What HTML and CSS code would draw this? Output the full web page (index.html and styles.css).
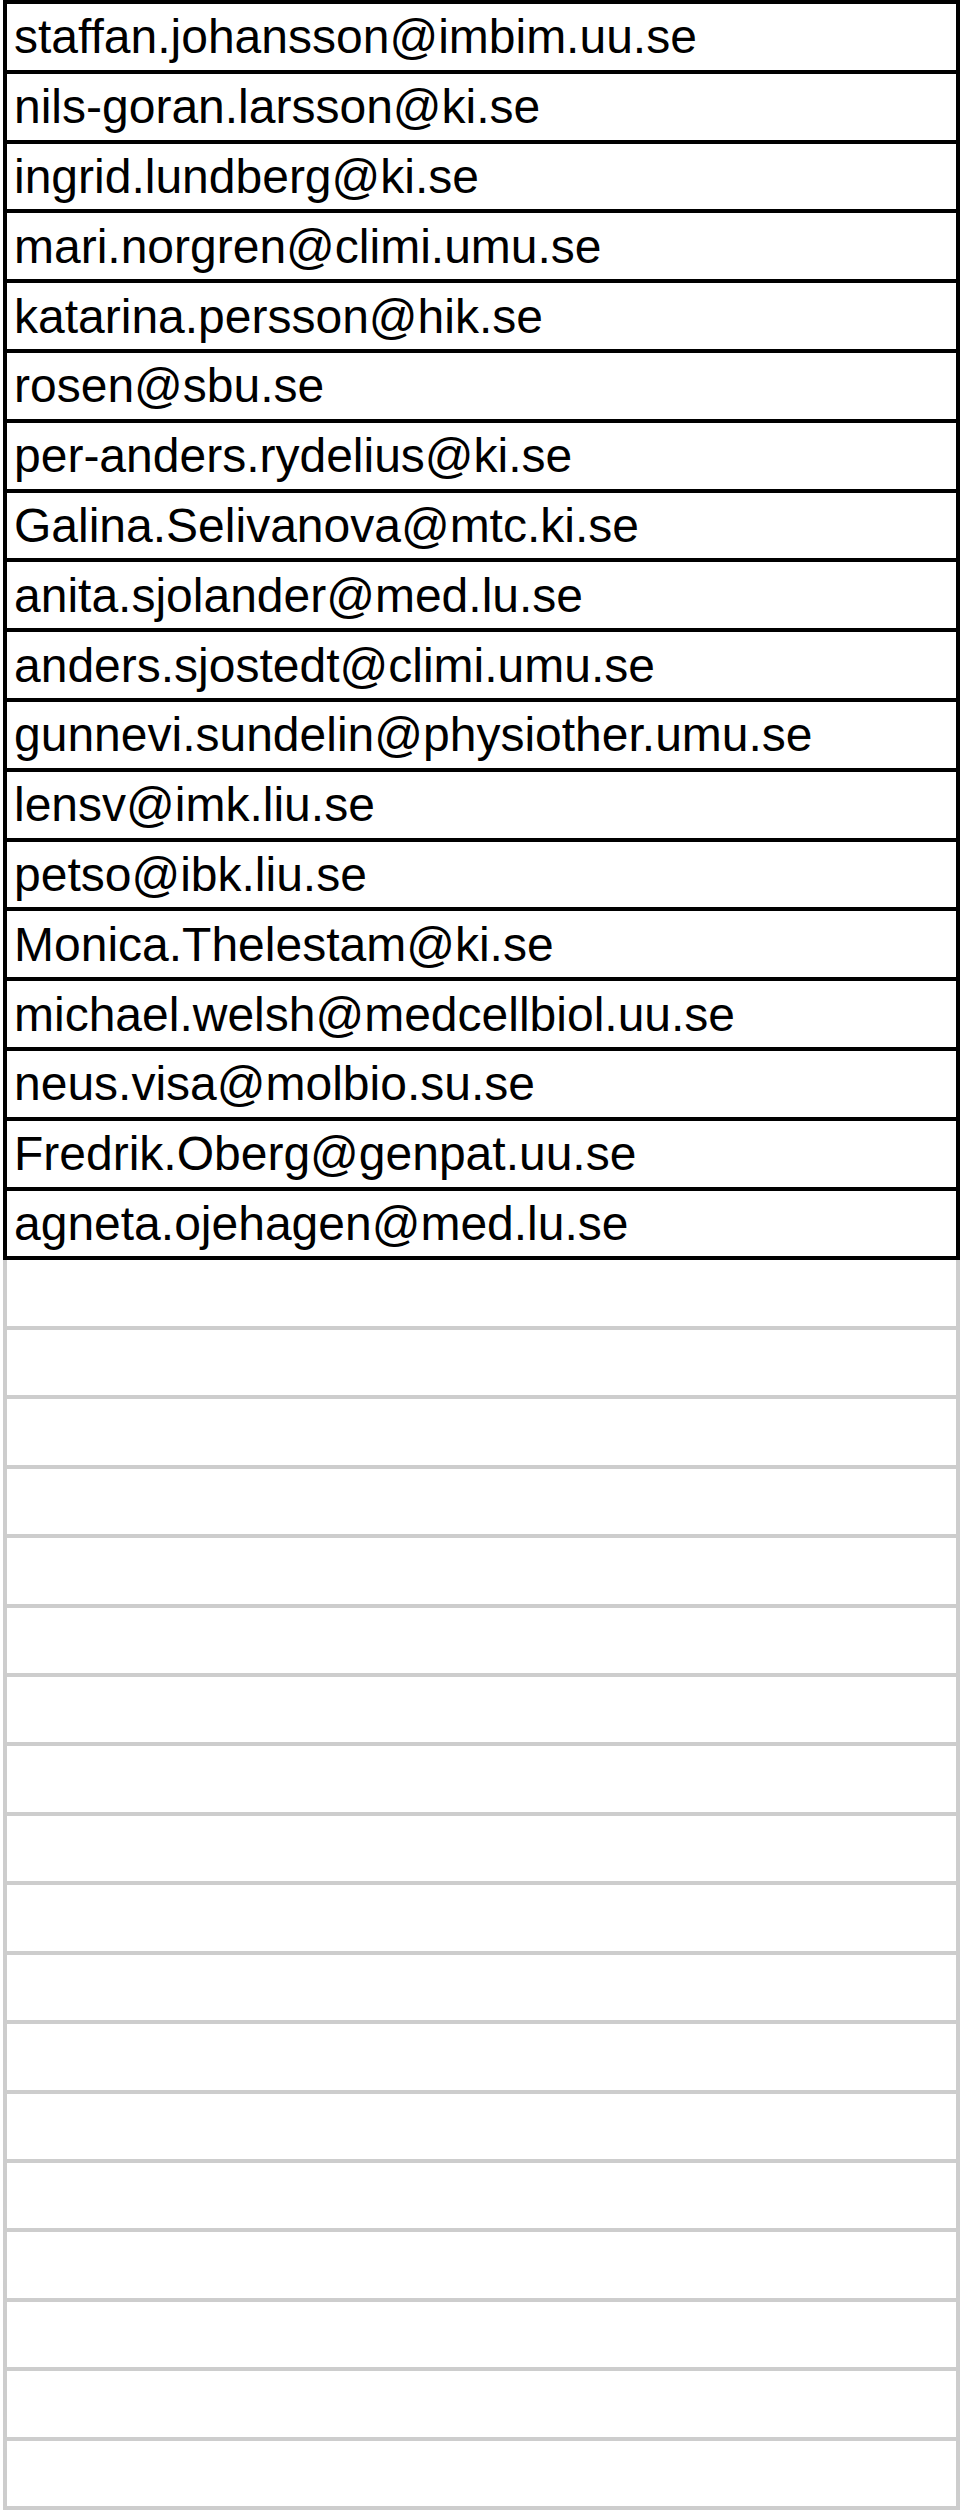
FILE: index.html
```html
<!DOCTYPE html>
<html lang="sv">
<head>
<meta charset="utf-8">
<title>E-postlista</title>
<link rel="stylesheet" href="styles.css">
</head>
<body>
<div class="sheet">
  <div class="filled">
    <div class="row">staffan.johansson@imbim.uu.se</div>
    <div class="row">nils-goran.larsson@ki.se</div>
    <div class="row">ingrid.lundberg@ki.se</div>
    <div class="row">mari.norgren@climi.umu.se</div>
    <div class="row">katarina.persson@hik.se</div>
    <div class="row">rosen@sbu.se</div>
    <div class="row">per-anders.rydelius@ki.se</div>
    <div class="row">Galina.Selivanova@mtc.ki.se</div>
    <div class="row">anita.sjolander@med.lu.se</div>
    <div class="row">anders.sjostedt@climi.umu.se</div>
    <div class="row">gunnevi.sundelin@physiother.umu.se</div>
    <div class="row">lensv@imk.liu.se</div>
    <div class="row">petso@ibk.liu.se</div>
    <div class="row">Monica.Thelestam@ki.se</div>
    <div class="row">michael.welsh@medcellbiol.uu.se</div>
    <div class="row">neus.visa@molbio.su.se</div>
    <div class="row">Fredrik.Oberg@genpat.uu.se</div>
    <div class="row">agneta.ojehagen@med.lu.se</div>
  </div>
  <div class="empty">
    <div class="blank"></div>
    <div class="blank"></div>
    <div class="blank"></div>
    <div class="blank"></div>
    <div class="blank"></div>
    <div class="blank"></div>
    <div class="blank"></div>
    <div class="blank"></div>
    <div class="blank"></div>
    <div class="blank"></div>
    <div class="blank"></div>
    <div class="blank"></div>
    <div class="blank"></div>
    <div class="blank"></div>
    <div class="blank"></div>
    <div class="blank"></div>
    <div class="blank"></div>
    <div class="blank"></div>
  </div>
</div>
</body>
</html>
```

FILE: styles.css
```css
html, body {
  margin: 0;
  padding: 0;
  background: #ffffff;
}

body {
  padding-left: 3px;
  font-family: "Liberation Sans", Arial, Helvetica, sans-serif;
  color: #000000;
}

.sheet {
  width: 957px;
  display: flex;
  flex-direction: column;
}

.filled {
  display: flex;
  flex-direction: column;
  border: 4px solid #000000;
  border-bottom: none;
}

.row {
  height: 65.8px;
  border-bottom: 4px solid #000000;
  display: flex;
  align-items: center;
  padding-left: 7px;
  font-size: 48px;
  line-height: 55px;
  white-space: nowrap;
}

.empty {
  display: flex;
  flex-direction: column;
  border-left: 4px solid #cdcdcd;
  border-right: 4px solid #cdcdcd;
}

.blank {
  height: 65.45px;
  border-bottom: 4px solid #cdcdcd;
}
```
